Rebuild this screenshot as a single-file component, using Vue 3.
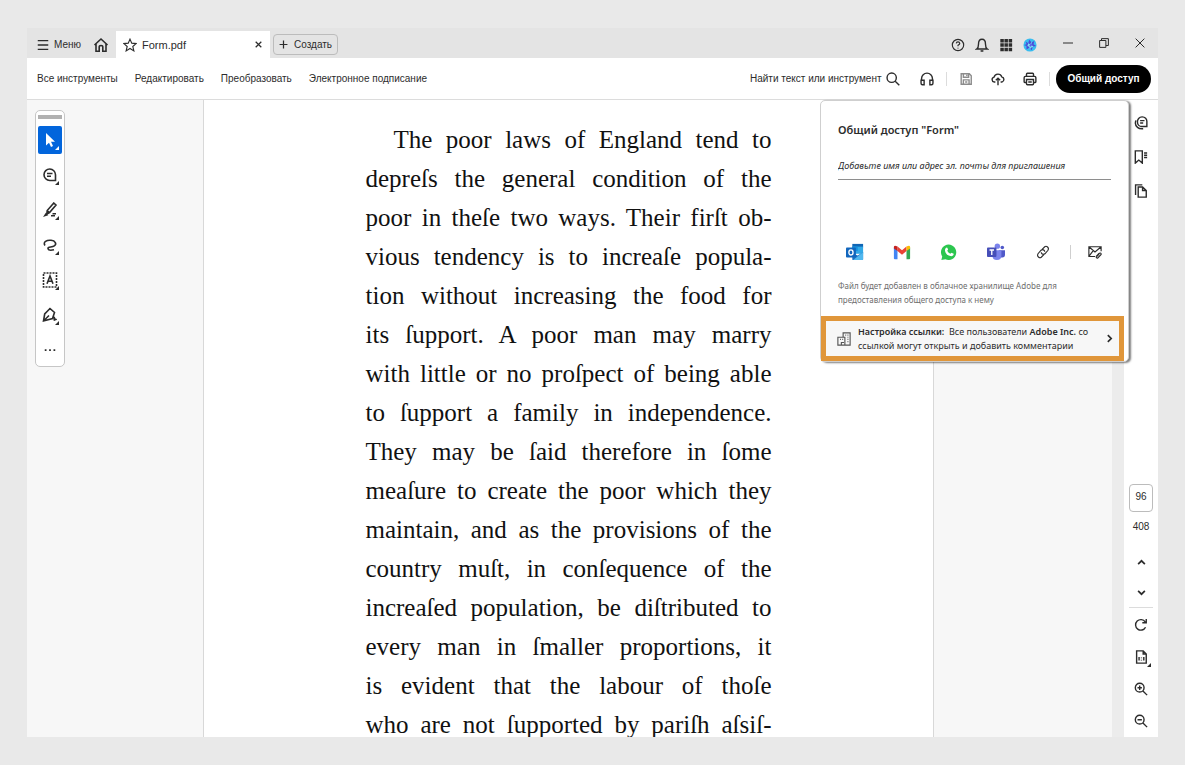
<script setup>
import { ref } from 'vue'

const search = ref('')
const invitee = ref('')
const page = ref('96')
const activeTool = ref('select')

const menuItems = ['Все инструменты', 'Редактировать', 'Преобразовать', 'Электронное подписание']

const actions = [
    { name: 'save', title: 'Сохранить', muted: true, line: 'M2.5 2h9.3L14 4.200V14H2.500ZM5 2v4h6V2M5 14V9h6.500v5M7 11.500h2.500M9 3v1.500' },
    { name: 'cloud', title: 'Загрузить', line: 'M5 11.500H3.800A2.900 2.900 0 0 1 3.500 5.800 4.600 4.600 0 0 1 12.300 5.500 3.100 3.100 0 0 1 12.500 11.500H11M8 15V7M5.500 9.500 8 7l2.500 2.500' },
    { name: 'print', title: 'Печать', line: 'M4 5V2.500Q4 1.500 5 1.500H11Q12 1.500 12 2.500V5M4 12H2.500Q1.300 12 1.300 11V6.500Q1.300 5 2.800 5H13.200Q14.700 5 14.700 6.500V11Q14.700 12 13.500 12H12M4 8.500h8v5q0 1-1 1H5q-1 0-1-1ZM6 11.500h4' }
]

const tools = [
    { name: 'select', title: 'Выделение', fill: 'M4 1v12.500l3-2.800 2 4.300 2-1-2-4.200h4Z' },
    { name: 'comment', title: 'Комментарий', line: 'M2 7.700A5.800 5.800 0 0 1 7.800 2 5.800 5.800 0 0 1 13.500 7.700V13.500H7.800A5.800 5.800 0 0 1 2 7.700ZM5 6.500h5.500M5 9.300h4' },
    { name: 'highlight', title: 'Выделить текст', line: 'M11.800 1 14 3 7.500 10.500 4.800 12 5.200 8.500ZM5.300 8.800 7.500 10.700M9 13.800h4M10.500 11.800h3.500', fill: 'M1 15 3.800 10.800 6.300 13.300Z' },
    { name: 'draw', title: 'Рисование', line: 'M3 8.500C.5 5 5 2.800 9 3.300 13.500 3.800 15 7 12.300 8.800 10 10.400 5.500 9.800 6 11.700 6.400 13.300 9.500 13.400 12 12.800' },
    { name: 'text', title: 'Текст', line: 'M5 11.800 8 4l3 7.800M6 9.200h4', dash: 'M1.500 1h13v14h-13Z' },
    { name: 'sign', title: 'Подпись', line: 'M8 1.500 12.500 5.500 10.500 11.500 1.500 14 2.700 7ZM1.500 14 7 8.500M2.700 7 8 1.500M10.500 11.500q3-3 1.500 2 1.500-2 2.500-.5' }
]

const sideTabs = [
    { title: 'Комментарии', line: 'M4 7A5.300 5.300 0 0 1 9.300 1 5.300 5.300 0 0 1 14.700 6.800V12H9A5 5 0 0 1 4 7ZM7 5.300h5M7 8h3.500M2.200 5Q.300 10 4 13 6 14.800 10.500 14.500' },
    { title: 'Закладки', line: 'M1.500 1H9.500V15L5.500 11.500 1.500 15ZM11.500 3.500H15M11.500 6H15M11.500 8.500H15' },
    { title: 'Страницы', line: 'M4.800 3.500h5L14 7.500v7.500H4.800ZM9.800 3.500v4H14M1.800 12.500V1H9.500' }
]

const viewTools = [
    { title: 'Повернуть', line: 'M13.200 10.500A6 6 0 1 1 12.800 4.500M14 1V5.500H9.500' },
    { title: 'Масштаб страницы', corner: true, line: 'M3 1h7.500L14 4.500v10.500H3ZM10.500 1V4.500h3.500M5.800 8v4M11.200 8v4M8.500 8.500v1M8.500 11v1' },
    { title: 'Увеличить', line: 'M11.500 6.500a5 5 0 1 1-10 0 5 5 0 0 1 10 0ZM10.200 10.200 15 15M4 6.500h5M6.500 4v5' },
    { title: 'Уменьшить', line: 'M11.500 6.500a5 5 0 1 1-10 0 5 5 0 0 1 10 0ZM10.200 10.200 15 15M4 6.500h5' }
]

const lines = [
    'The poor laws of England tend to',
    'depreſs the general condition of the',
    'poor in theſe two ways. Their firſt ob-',
    'vious tendency is to increaſe popula-',
    'tion without increasing the food for',
    'its ſupport. A poor man may marry',
    'with little or no proſpect of being able',
    'to ſupport a family in independence.',
    'They may be ſaid therefore in ſome',
    'meaſure to create the poor which they',
    'maintain, and as the provisions of the',
    'country muſt, in conſequence of the',
    'increaſed population, be diſtributed to',
    'every man in ſmaller proportions, it',
    'is evident that the labour of thoſe',
    'who are not ſupported by pariſh aſsiſ-'
]
</script>

<template>
    <div class="window">
        <header class="title-bar">
            <button class="menu-btn">
                <svg class="icon bold" viewBox="0 0 16 16"><path d="M2 3h12M2 8h12M2 13h12" /></svg>
                Меню
            </button>
            <button class="icon-btn home" aria-label="Главная">
                <svg class="icon large bold" viewBox="0 0 16 16"><path d="M1.500 8 8 2l6.500 6M3 7v7.200h3.200V10Q6.200 8.500 8 8.500T9.800 10v4.200H13V7" /></svg>
            </button>
            <div class="tab">
                <svg class="icon" viewBox="0 0 16 16"><path d="m8 1.300 2 4.600 5 .5-3.800 3.300 1.200 5L8 12l-4.400 2.700 1.200-5L1 6.400l5-.5Z" /></svg>
                <span class="tab-name">Form.pdf</span>
                <button class="icon-btn" aria-label="Закрыть вкладку">
                    <svg class="icon tiny close" viewBox="0 0 16 16"><path d="m3 3 10 10M13 3 3 13" /></svg>
                </button>
            </div>
            <button class="create-btn">
                <svg class="icon tiny close" viewBox="0 0 16 16"><path d="M8 1v14M1 8h14" /></svg>
                Создать
            </button>
            <div class="system">
                <button class="icon-btn" aria-label="Справка">
                    <svg class="icon" viewBox="0 0 16 16"><circle cx="8" cy="8" r="6.500" /><path d="M6 6.200Q6.200 4.500 8 4.500T10 6.200Q10 7.200 8 8.300v1M8 11v1" /></svg>
                </button>
                <button class="icon-btn" aria-label="Уведомления">
                    <svg class="icon bold" viewBox="0 0 16 16"><path d="M2 12.500Q4 11 4 7 4 1.500 8 1.500T12 7q0 4 2 5.500ZM6.500 14.200q1.500 1.600 3 0" /></svg>
                </button>
                <button class="icon-btn" aria-label="Приложения">
                    <svg class="icon" viewBox="0 0 16 16"><path class="solid" d="M1.500 1h4v4h-4ZM6.200 1h4v4h-4ZM11 1h4v4h-4ZM1.500 6h4v4h-4ZM6.200 6h4v4h-4ZM11 6h4v4h-4ZM1.500 11h4v4h-4ZM6.200 11h4v4h-4ZM11 11h4v4h-4Z" /></svg>
                </button>
                <button class="icon-btn" aria-label="Профиль">
                    <svg class="logo avatar" viewBox="0 0 16 16">
                        <circle cx="8" cy="8" r="7.500" fill="#39bdf0" />
                        <path fill="#4b49d6" d="m3 4 3 2 1-4 3 3 3-2-1 4 3 2-4 1-1 4-3-3-3 2V9L1 8l3-1Z" />
                        <path fill="#7de2ef" d="m6 6 2 1 2-3v4l2 2-3 1-1 2-1-3-2-1Z" />
                        <path fill="#5960e8" d="m9 6 2 1-2 3-2-1Z" />
                    </svg>
                </button>
            </div>
            <div class="window-controls">
                <button class="icon-btn" aria-label="Свернуть">
                    <svg class="icon small bold" viewBox="0 0 16 16"><path d="M0 8h16" /></svg>
                </button>
                <button class="icon-btn" aria-label="Восстановить">
                    <svg class="icon small bold" viewBox="0 0 16 16"><path d="M1 4h10v11H1ZM4 4V1h11v11h-4" /></svg>
                </button>
                <button class="icon-btn" aria-label="Закрыть">
                    <svg class="icon small bold" viewBox="0 0 16 16"><path d="m1 1 14 14M15 1 1 15" /></svg>
                </button>
            </div>
        </header>

        <nav class="toolbar">
            <div class="menu">
                <a v-for="item in menuItems" :key="item" href="#">{{ item }}</a>
            </div>
            <div class="search">
                <input v-model="search" type="text" aria-label="Поиск" placeholder="Найти текст или инструмент">
                <svg class="icon bold" viewBox="0 0 16 16"><circle cx="6.500" cy="6.500" r="5.300" /><path d="m10.500 10.500 4.700 4.700" /></svg>
            </div>
            <button class="icon-btn" aria-label="Прослушать">
                <svg class="icon bold" viewBox="0 0 16 16"><path d="M1.800 9.500V7.500a6.200 6.200 0 0 1 12.400 0v2M1.200 9.500h3.500v5H2.800Q1.200 14.500 1.200 12.800ZM14.800 9.500h-3.500v5h1.900q1.600 0 1.600-1.700Z" /></svg>
            </button>
            <div class="actions">
                <button v-for="a in actions" :key="a.name" class="icon-btn" :class="{ muted: a.muted }" :aria-label="a.title">
                    <svg class="icon bold" viewBox="0 0 16 16"><path :d="a.line" /></svg>
                </button>
            </div>
            <button class="share-btn">Общий доступ</button>
        </nav>

        <main class="workspace">
            <aside class="gutter">
                <div class="tools">
                    <span class="handle"></span>
                    <button
                        v-for="tool in tools"
                        :key="tool.name"
                        class="tool"
                        :class="{ active: tool.name === activeTool }"
                        :aria-label="tool.title"
                        @click="activeTool = tool.name"
                    >
                        <svg class="icon large bold" viewBox="0 0 16 16">
                            <path v-if="tool.dash" class="dash" :d="tool.dash" />
                            <path v-if="tool.line" :d="tool.line" />
                            <path v-if="tool.fill" class="solid" :d="tool.fill" />
                        </svg>
                        <span class="corner"></span>
                    </button>
                    <button class="tool more" aria-label="Ещё">
                        <svg class="icon" viewBox="0 0 16 16"><path class="solid" d="M2 7h2v2H2ZM7 7h2v2H7ZM12 7h2v2h-2Z" /></svg>
                    </button>
                </div>
            </aside>

            <article class="page">
                <div class="page-text">
                    <p v-for="line in lines" :key="line">{{ line }}</p>
                </div>
            </article>

            <div class="gutter"></div>
            <div class="scroll-track"></div>

            <aside class="rail">
                <button v-for="tab in sideTabs" :key="tab.title" class="icon-btn rail-tab" :aria-label="tab.title">
                    <svg class="icon bold" viewBox="0 0 16 16"><path :d="tab.line" /></svg>
                </button>
                <div class="pager">
                    <input v-model="page" type="text" aria-label="Страница">
                    <span class="total">408</span>
                    <button class="icon-btn" aria-label="Предыдущая">
                        <svg class="icon tiny heavy" viewBox="0 0 16 16"><path d="m2 11 6-6 6 6" /></svg>
                    </button>
                    <button class="icon-btn" aria-label="Следующая">
                        <svg class="icon tiny heavy" viewBox="0 0 16 16"><path d="m2 5 6 6 6-6" /></svg>
                    </button>
                </div>
                <div class="view-tools">
                    <button v-for="tool in viewTools" :key="tool.title" class="icon-btn" :aria-label="tool.title">
                        <svg class="icon bold" viewBox="0 0 16 16"><path :d="tool.line" /></svg>
                        <span v-if="tool.corner" class="corner"></span>
                    </button>
                </div>
            </aside>

            <section class="share-panel">
                <div class="share-body">
                    <h2>Общий доступ "Form"</h2>
                    <input v-model="invitee" type="text" aria-label="Получатели" placeholder="Добавьте имя или адрес эл. почты для приглашения">
                    <div class="services">
                        <button class="icon-btn" aria-label="Outlook">
                            <svg class="logo" viewBox="0 0 20 20">
                                <path fill="#1066b5" d="M7 1h12v4H7Z" />
                                <path fill="#32a9e7" d="M7 4h12v8H7Z" />
                                <path fill="#1490df" d="M7 4h6v5H7Z" />
                                <path fill="#1b72c4" d="m7 11 6 3 6-4v8q0 1-1 1H8q-1 0-1-1Z" />
                                <path fill="#50b8ef" d="m19 10-11 9h10q1 0 1-1Z" />
                                <rect y="5" width="11" height="11" rx="1" fill="#1166bd" />
                                <ellipse cx="5.500" cy="10.500" rx="2.300" ry="2.800" fill="none" stroke="#fff" stroke-width="1.500" />
                            </svg>
                        </button>
                        <button class="icon-btn" aria-label="Gmail">
                            <svg class="logo" viewBox="0 0 20 20">
                                <path fill="#4285f4" d="M1 5l4 3v10H2q-1 0-1-1Z" />
                                <path fill="#34a853" d="m15 8 4-3v12q0 1-1 1h-3Z" />
                                <path fill="#ea4335" d="M5 4l5 4 5-4v5l-5 4-5-4Z" />
                                <path fill="#c5221f" d="M1 4.500Q1 3 2.500 3L5 4v5L1 6Z" />
                                <path fill="#fbbc04" d="m15 4 2.500-1Q19 3 19 4.500V6l-4 3Z" />
                            </svg>
                        </button>
                        <button class="icon-btn" aria-label="WhatsApp">
                            <svg class="logo" viewBox="0 0 20 20">
                                <path fill="#2cc64f" d="M1.500 19 2.500 15A8.500 8.500 0 1 1 6 18Z" />
                                <path fill="#fff" d="M6.500 5.500q1.500-1 2 .5l.5 1.500-1 1.200q1 2.300 3.500 3.300l1.200-1.300 2.500 1.200q.2 2.500-2.500 2.800Q7 14.500 5.500 8.500q0-2 1-3Z" />
                            </svg>
                        </button>
                        <button class="icon-btn" aria-label="Teams">
                            <svg class="logo" viewBox="0 0 20 20">
                                <circle cx="17" cy="5" r="2" fill="#5059c9" />
                                <path fill="#5059c9" d="M13 8h7v5q0 3-3 3h-4Z" />
                                <circle cx="11.500" cy="3.500" r="3" fill="#7b83eb" />
                                <path fill="#7b83eb" d="M6 8h10v6q0 5-5 5t-5-5Z" />
                                <rect y="5" width="10.500" height="10.500" rx="1" fill="#464eb8" />
                                <path stroke="#fff" stroke-width="1.500" d="M2.800 7.800h5M5.300 7.800v5.500" />
                            </svg>
                        </button>
                        <button class="icon-btn" aria-label="Ссылка">
                            <svg class="icon" viewBox="0 0 16 16"><path d="m7 5 3-3q1.500-1.200 3.200.3T13.700 6l-3.500 4Q8.500 11.500 6.800 10 6 9.200 6 8.200M9 11l-3 3q-1.500 1.200-3.200-.3T2.300 10L5.800 6Q7.500 4.500 9.200 6 10 6.800 10 7.800" /></svg>
                        </button>
                        <span class="divider"></span>
                        <button class="icon-btn" aria-label="Письмо с вложением">
                            <svg class="icon" viewBox="0 0 16 16"><path d="M8 13.200H1V2h14v5M1 2l7 6 7-6M1 13l5-6.500M12.500 9.500 9.500 13q-.5 2 1.500 2l4-4.200Q15.200 8.500 13 9.500l-2.500 3.500" /></svg>
                        </button>
                    </div>
                    <p class="note">Файл будет добавлен в облачное хранилище Adobe для<br>предоставления общего доступа к нему</p>
                </div>
                <button class="link-settings">
                    <svg class="icon building" viewBox="0 0 16 16"><path d="M7 6V1h8v14H1V6h8v9M5 15v-3h3M3.500 8.500h1M6 8.500h1M9.500 3.500h1M12 3.500h1M12 6h1M12 8.500h1M12 11h1" /></svg>
                    <span class="link-text"><b>Настройка ссылки:</b>&nbsp; Все пользователи <b>Adobe Inc.</b> со<br>ссылкой могут открыть и добавить комментарии</span>
                    <svg class="icon tiny heavy" viewBox="0 0 16 16"><path d="m5 2 6 6-6 6" /></svg>
                </button>
            </section>
        </main>
    </div>
</template>

<style>
body {
    background: #e9e9e9;
}
</style>

<style scoped>
.window {
    display: flex;
    flex-direction: column;
    height: calc(100vh - 56px);
    margin: 28px 27px;
    background: #fff;
    color: #2c2c2c;
    font: 10px/16px "Liberation Sans", Arial, sans-serif;
    overflow: hidden;
}

.window * {
    box-sizing: border-box;
}

button,
input {
    font: inherit;
    color: inherit;
}

button {
    padding: 0;
    border: none;
    background: none;
    cursor: pointer;
}

input {
    border: none;
    background: none;
    outline: none;
}

input::placeholder {
    color: #2c2c2c;
    opacity: 1;
}

.icon {
    display: block;
    flex: none;
    width: 14px;
    height: 14px;
    fill: none;
    stroke: currentColor;
    stroke-width: 1.3;
}

.icon.tiny {
    width: 9px;
    height: 9px;
}

.icon.small {
    width: 10px;
    height: 10px;
}

.icon.large {
    width: 16px;
    height: 16px;
}

.icon.bold {
    stroke-width: 1.6;
}

.icon.close {
    stroke-width: 2.2;
}

.icon.heavy {
    stroke-width: 3;
}

.solid {
    fill: currentColor;
    stroke: none;
}

.dash {
    stroke-dasharray: 2 1;
}

.logo {
    display: block;
    width: 18px;
    height: 18px;
}

.logo.avatar {
    width: 14px;
    height: 14px;
}

.icon-btn {
    position: relative;
    display: flex;
    align-items: center;
    justify-content: center;
}

.title-bar {
    display: flex;
    align-items: center;
    flex: none;
    height: 30px;
    padding: 3px 13px 0 9px;
    background: #e4e4e4;
}

.menu-btn {
    display: flex;
    align-items: center;
    gap: 4px;
}

.home {
    margin: 0 7px 0 12px;
}

.tab {
    display: flex;
    align-items: center;
    align-self: stretch;
    gap: 5px;
    width: 154px;
    padding: 0 7px;
    background: #fff;
    font-size: 11px;
}

.tab-name {
    flex: 1;
}

.create-btn {
    display: flex;
    align-items: center;
    gap: 6px;
    height: 21px;
    margin-left: 3px;
    padding: 0 5px;
    border: 1px solid #bcbcbc;
    border-radius: 4px;
}

.system {
    display: flex;
    gap: 10px;
    margin-left: auto;
}

.window-controls {
    display: flex;
    gap: 26px;
    margin: 0 0 4px 26px;
}

.toolbar {
    display: flex;
    align-items: center;
    flex: none;
    height: 42px;
    padding: 0 7px 0 10px;
    border-bottom: 1px solid #dcdcdc;
}

.menu {
    display: flex;
    gap: 17px;
}

.menu a {
    color: inherit;
    text-decoration: none;
}

.search {
    display: flex;
    align-items: center;
    gap: 2px;
    margin: 0 20px 0 auto;
}

.search input {
    width: 134px;
    padding: 0;
}

.actions {
    display: flex;
    gap: 18px;
    margin: 0 6px 0 12px;
    padding: 0 12px;
    border-left: 1px solid #dcdcdc;
    border-right: 1px solid #dcdcdc;
}

.muted {
    color: #8c8c8c;
}

.share-btn {
    width: 95px;
    height: 28px;
    border-radius: 14px;
    background: #000;
    color: #fff;
    font-weight: bold;
}

.workspace {
    position: relative;
    display: grid;
    grid-template-columns: 176px 1fr 178px 12px 34px;
    flex: 1;
    min-height: 0;
}

.gutter {
    background: #f7f7f7;
}

.tools {
    display: flex;
    flex-direction: column;
    align-items: center;
    gap: 7px;
    width: 30px;
    margin: 10px 0 0 8px;
    padding: 4px 0 2px;
    border: 1px solid #c6c6c6;
    border-radius: 5px;
    background: #fff;
}

.handle {
    width: 24px;
    height: 4px;
    background: #b1b1b1;
}

.tool {
    position: relative;
    display: flex;
    align-items: center;
    justify-content: center;
    width: 24px;
    height: 28px;
    border-radius: 2px;
}

.tool.active {
    background: #0265dc;
    color: #fff;
}

.corner {
    position: absolute;
    right: 3px;
    bottom: 4px;
    border: 2px solid transparent;
    border-right-color: currentColor;
    border-bottom-color: currentColor;
}

.page {
    min-height: 0;
    border-left: 1px solid #d8d8d8;
    border-right: 1px solid #d8d8d8;
    overflow: hidden;
}

.page-text {
    width: 406px;
    margin: 20px auto 0;
    color: #111;
    font: 25px/39px "Liberation Serif", "Times New Roman", serif;
}

.page-text p {
    margin: 0;
    text-align: justify;
    text-align-last: justify;
    white-space: nowrap;
}

.page-text p:first-child {
    padding-left: 28px;
}

.scroll-track {
    background: #ececec;
}

.rail {
    display: flex;
    flex-direction: column;
    align-items: center;
    padding: 6px 0 9px;
}

.rail-tab {
    width: 34px;
    height: 34px;
}

.pager {
    display: flex;
    flex-direction: column;
    align-items: center;
    width: 24px;
    margin-top: auto;
    border-bottom: 1px solid #dcdcdc;
}

.pager input {
    width: 24px;
    height: 28px;
    padding: 0 0 3px;
    border: 1px solid #bcbcbc;
    border-radius: 4px;
    text-align: center;
}

.total {
    margin: 7px 0 12px;
}

.pager button {
    height: 30px;
}

.view-tools {
    display: flex;
    flex-direction: column;
    gap: 18px;
    padding-top: 10px;
}

.view-tools .corner {
    right: -3px;
    bottom: -3px;
}

/* drops down from the share button, over the page */
.share-panel {
    position: absolute;
    top: 0;
    right: 29px;
    width: 309px;
    border: 1px solid #cfcfcf;
    border-radius: 5px;
    background: #fff;
    box-shadow: 2px 1px 2px rgba(0, 0, 0, 0.5);
    font: 9px/14px "Noto Sans", "Open Sans", sans-serif;
}

.share-body {
    padding: 21px 17px 0;
}

.share-panel h2 {
    margin: 0 0 15px;
    font-size: 11px;
    line-height: 16px;
    font-weight: 600;
}

.share-body input {
    width: 100%;
    height: 27px;
    padding: 0 0 2px;
    border-bottom: 1px solid #8e8e8e;
    font-style: italic;
}

.services {
    display: grid;
    grid-template-columns: repeat(5, 47px) 8px 41px;
    align-items: center;
    justify-items: center;
    height: 20px;
    margin: 62px -9px 17px -7px;
}

.divider {
    width: 1px;
    height: 14px;
    background: #cfcfcf;
}

.note {
    margin: 0 0 9px;
    color: #6e6e6e;
    font-size: 8px;
}

.link-settings {
    display: flex;
    align-items: center;
    gap: 7px;
    width: 303px;
    height: 45px;
    padding: 0 5px 0 11px;
    border: 5px solid #e0963a;
    background: #f7f7f7;
    text-align: left;
}

.building {
    color: #555;
}

.link-text {
    flex: 1;
    white-space: nowrap;
}

.link-text b {
    font-weight: 600;
}
</style>
